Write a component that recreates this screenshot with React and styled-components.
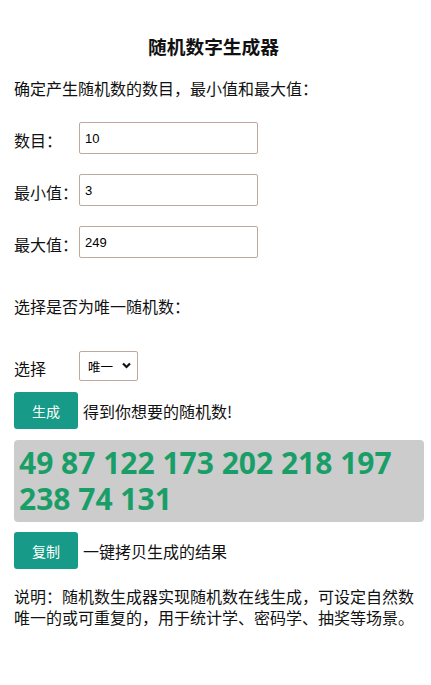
import React, { useState } from 'react'
import styled, { createGlobalStyle } from 'styled-components'

const GlobalStyle = createGlobalStyle`
  body {
    margin: 0;
    background: #fff;
    color: #111;
    font-family: "Noto Sans CJK SC", "Noto Sans", sans-serif;
  }
`

const Page = styled.div`
  width: 410px;
  padding: 34px 0 40px 14px;
  display: flex;
  flex-direction: column;
`

const Title = styled.h3`
  margin: 0 0 19px;
  padding-right: 11px;
  text-align: center;
  font-size: 18.72px;
  font-weight: 700;
  line-height: 24px;
`

const Text = styled.p`
  margin: ${(p) => p.$top || 0}px 0 0;
  font-size: 16px;
  line-height: ${(p) => p.$lh || 22}px;
`

const Fields = styled.div`
  margin-top: 23px;
  display: flex;
  flex-direction: column;
  gap: 20px;
`

const Row = styled.label`
  display: flex;
  align-items: center;
  margin-top: ${(p) => p.$top || 0}px;
  font-size: 16px;
  line-height: 22px;
`

const Label = styled.span`
  width: 65px;
  flex: none;
  padding-top: 3px;
`

const Input = styled.input`
  box-sizing: border-box;
  width: 179px;
  height: 32px;
  padding: 0 5px;
  border: 1px solid #bea99c;
  border-radius: 2px;
  font-family: "Liberation Sans", Arial, sans-serif;
  font-size: 13px;
  color: #000;
  outline: none;
`

const SelectWrap = styled.span`
  position: relative;
  display: inline-flex;

  svg {
    position: absolute;
    right: 7px;
    top: 11px;
    pointer-events: none;
  }
`

const Select = styled.select`
  appearance: none;
  box-sizing: border-box;
  width: 59px;
  height: 30px;
  padding: 0 0 0 8px;
  border: 1px solid #bea99c;
  border-radius: 2px;
  background: #fff;
  font-family: "Noto Sans CJK SC", sans-serif;
  font-size: 12.5px;
  color: #000;
  outline: none;
`

const Action = styled.div`
  display: flex;
  align-items: center;
  gap: 5px;
  margin-top: ${(p) => p.$top}px;
  font-size: 16px;
`

const Button = styled.button`
  width: 64px;
  height: 37px;
  border: none;
  border-radius: 3px;
  background: #179b88;
  color: #fff;
  font-family: "Noto Sans CJK SC", sans-serif;
  font-size: 14px;
  cursor: pointer;
`

const Result = styled.div`
  box-sizing: border-box;
  margin-top: 11px;
  height: 82px;
  padding: 5px 5px;
  border-radius: 4px;
  background: #cccccc;
  color: #1a9e68;
  font-family: "Open Sans", "Noto Sans", sans-serif;
  font-weight: 700;
  font-size: 30px;
  line-height: 36px;
`

const Chevron = () => (
  <svg width="9" height="7" viewBox="0 0 9 7">
    <path d="M1 1.5 L4.5 5 L8 1.5" fill="none" stroke="#111" strokeWidth="2.2" />
  </svg>
)

export default function App() {
  const [nums] = useState([49, 87, 122, 173, 202, 218, 197, 238, 74, 131])
  return (
    <>
      <GlobalStyle />
      <Page>
        <Title>随机数字生成器</Title>
        <Text>确定产生随机数的数目，最小值和最大值：</Text>
        <Fields>
          <Row>
            <Label>数目：</Label>
            <Input defaultValue="10" />
          </Row>
          <Row>
            <Label>最小值：</Label>
            <Input defaultValue="3" />
          </Row>
          <Row>
            <Label>最大值：</Label>
            <Input defaultValue="249" />
          </Row>
        </Fields>
        <Text $top={37}>选择是否为唯一随机数：</Text>
        <Row $top={34}>
          <Label>选择</Label>
          <SelectWrap>
            <Select defaultValue="unique">
              <option value="unique">唯一</option>
              <option value="repeat">可重复</option>
            </Select>
            <Chevron />
          </SelectWrap>
        </Row>
        <Action $top={11}>
          <Button>生成</Button>
          得到你想要的随机数!
        </Action>
        <Result>{nums.join(' ')}</Result>
        <Action $top={10}>
          <Button>复制</Button>
          一键拷贝生成的结果
        </Action>
        <Text $top={17} $lh={21}>
          说明：随机数生成器实现随机数在线生成，可设定自然数唯一的或可重复的，用于统计学、密码学、抽奖等场景。
        </Text>
      </Page>
    </>
  )
}
